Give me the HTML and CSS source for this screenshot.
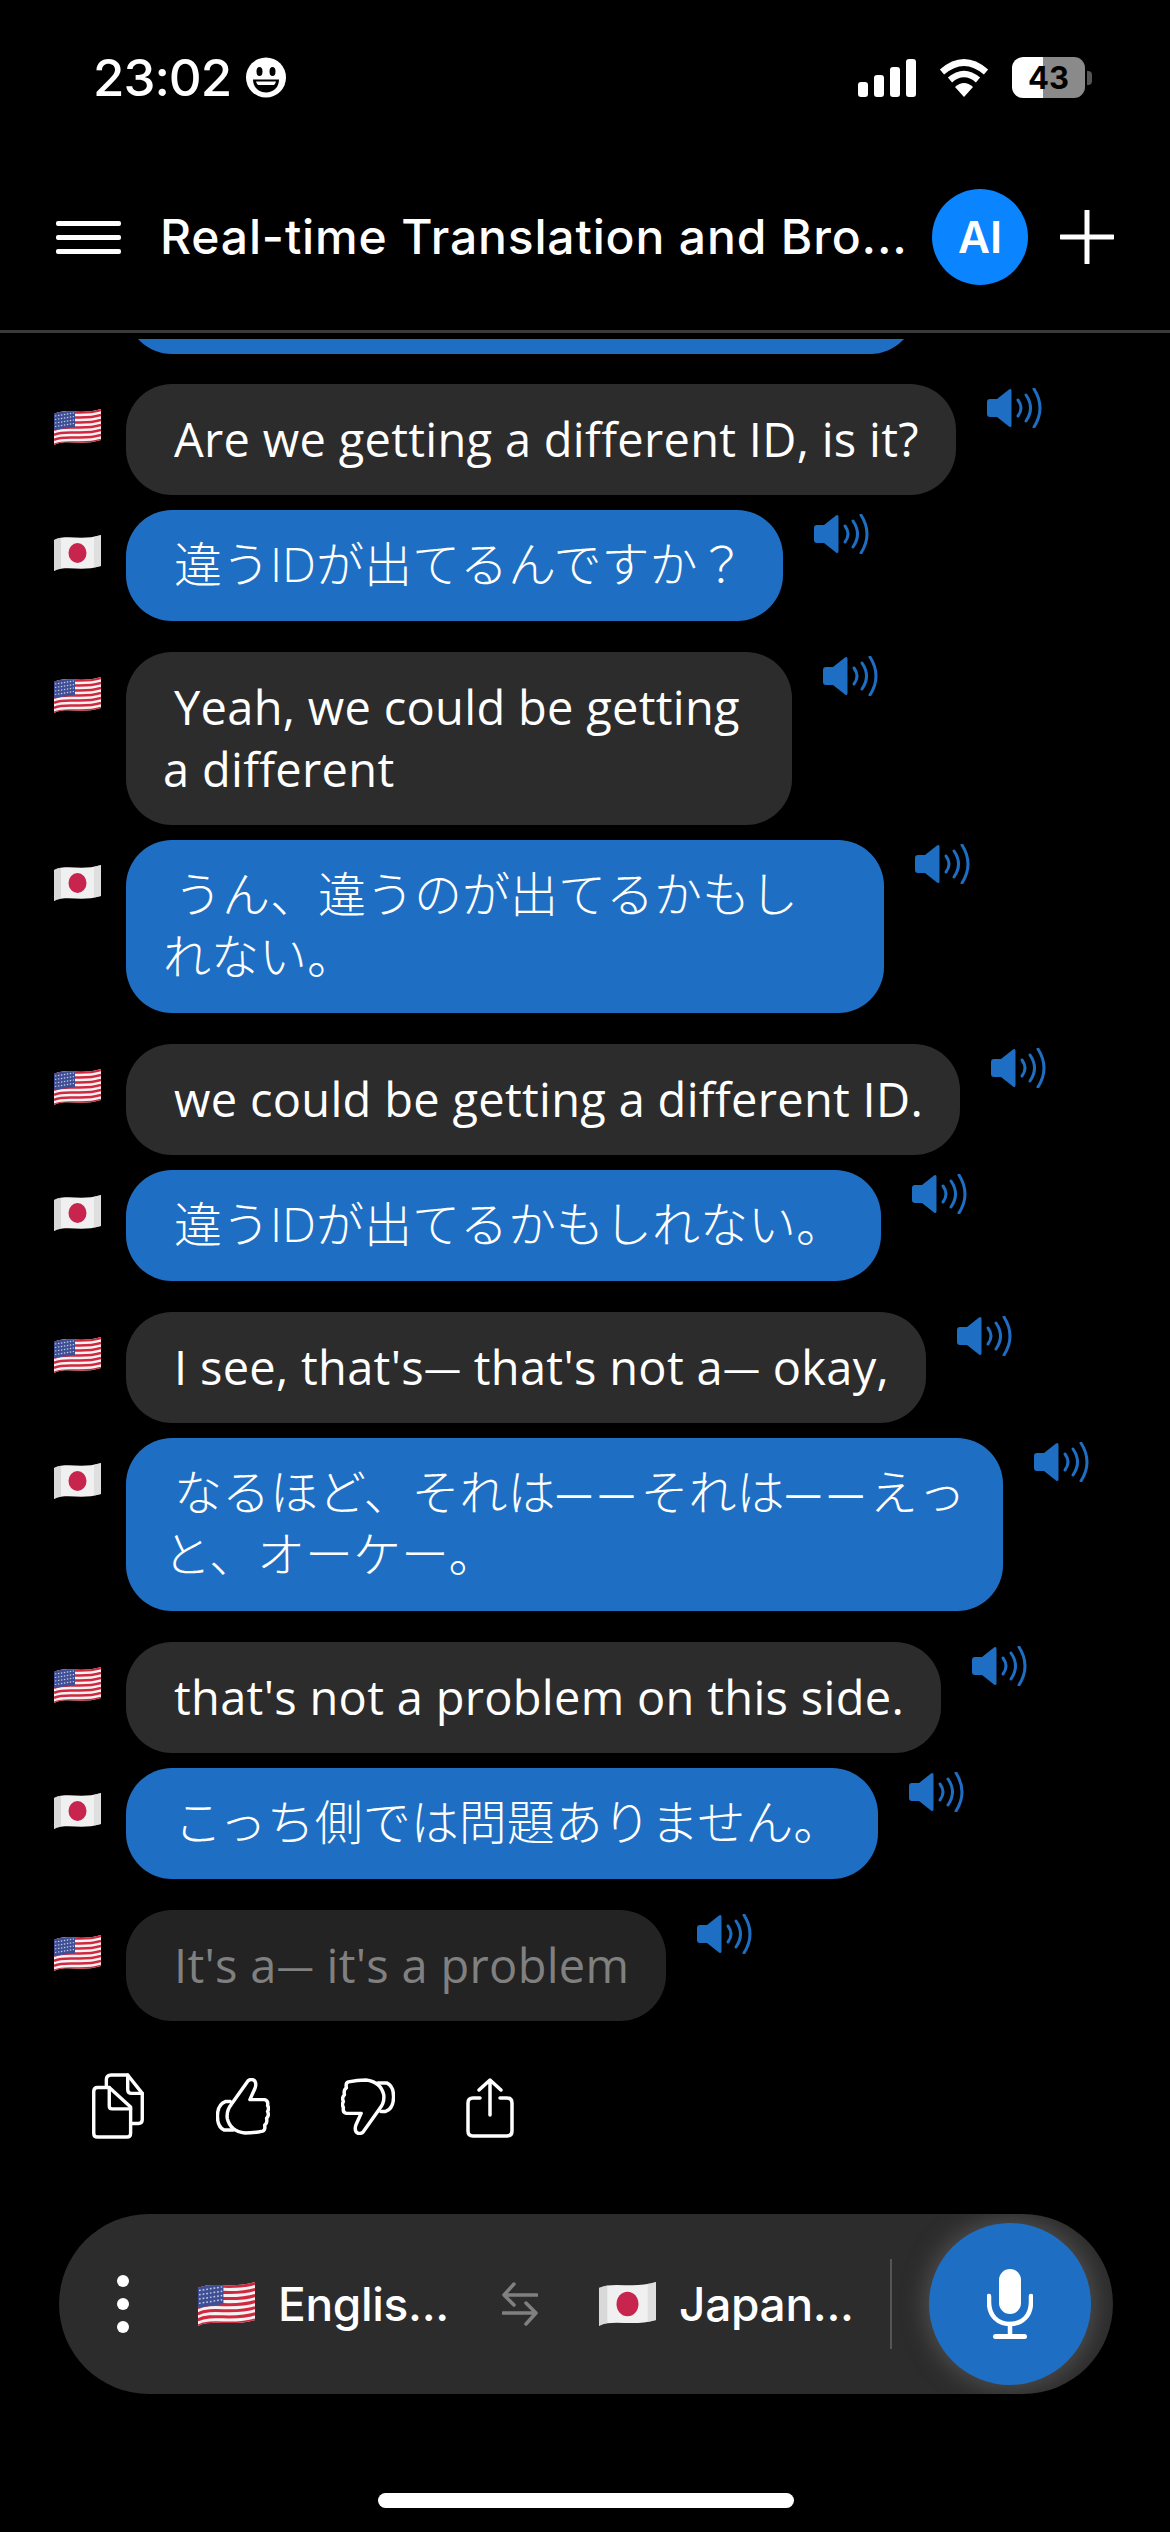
FILE: index.html
```html
<!DOCTYPE html>
<html lang="en">
<head>
    <meta charset="UTF-8">
    <meta name="viewport" content="width=device-width, initial-scale=1.0">
    <title>Real-time Translation and Broadcast</title>
    <link rel="stylesheet" href="styles.css">
</head>
<body>
    <!-- shared icons -->
    <svg class="defs" width="0" height="0">
        <defs>
            <clipPath id="wave"><path d="M0 5 C12 -1 28 6 47 0 V31 C28 37 12 30 0 36 Z"/></clipPath>
            <symbol id="flag-us" viewBox="0 0 47 36">
                <g clip-path="url(#wave)">
                    <rect width="47" height="36" fill="#f4f2f2"/>
                    <g fill="none" stroke="#d0283f" stroke-width="2.5">
                        <path d="M0 6 C12 0 28 7 47 1"/>
                        <path d="M0 11 C12 5 28 12 47 6"/>
                        <path d="M0 16 C12 10 28 17 47 11"/>
                        <path d="M0 21 C12 15 28 22 47 16"/>
                        <path d="M0 26 C12 20 28 27 47 21"/>
                        <path d="M0 31 C12 25 28 32 47 26"/>
                        <path d="M0 36 C12 30 28 37 47 31"/>
                    </g>
                    <path d="M0 4 L21 1 V18 L0 21 Z" fill="#3f4f96"/>
                    <g fill="none" stroke="#c6cbe4" stroke-width="1.2" stroke-dasharray="1.4 1.6">
                        <path d="M1 7 L20 4"/>
                        <path d="M1 10.500 L20 7.500"/>
                        <path d="M1 14 L20 11"/>
                        <path d="M1 17.500 L20 14.500"/>
                    </g>
                </g>
            </symbol>
            <symbol id="flag-jp" viewBox="0 0 47 36">
                <g clip-path="url(#wave)">
                    <rect width="47" height="36" fill="#f1f0f0"/>
                    <rect width="7" height="36" fill="#c9c9c9" opacity="0.6"/>
                    <rect x="40" width="7" height="36" fill="#d4d4d4" opacity="0.6"/>
                </g>
                <ellipse cx="23.500" cy="18" rx="9" ry="10" fill="#c7244e"/>
            </symbol>
            <symbol id="speaker" viewBox="0 0 55 40">
                <path d="M3 11 H10 L22 1.500 Q24.500 0 24.500 3 V37 Q24.500 40 22 38.500 L10 29 H3 Q0 29 0 26 V14 Q0 11 3 11 Z" fill="#1e6fc4"/>
                <g fill="none" stroke="#1e6fc4" stroke-width="3" stroke-linecap="round">
                    <path d="M31 12 Q37 20 31 28"/>
                    <path d="M39 7 Q48 20 39 33"/>
                    <path d="M47 1 Q59 20 47 39"/>
                </g>
            </symbol>
        </defs>
    </svg>

    <div class="phone">
        <div class="status-bar">
            <div class="status-left">
                <span class="clock">23:02</span>
                <svg class="smiley" viewBox="0 0 40 40">
                    <circle cx="20" cy="20" r="20" fill="#fff"/>
                    <ellipse cx="13.500" cy="14" rx="3" ry="4.500" fill="#000"/>
                    <ellipse cx="26.500" cy="14" rx="3" ry="4.500" fill="#000"/>
                    <path d="M7 22 H33 C33 30 27 35 20 35 C13 35 7 30 7 22 Z" fill="#000"/>
                    <path d="M10 24 H30 C29.500 25.500 29 26.500 28 27.500 H12 C11 26.500 10.500 25.500 10 24 Z" fill="#fff"/>
                </svg>
            </div>
            <div class="status-right">
                <svg class="signal" viewBox="0 0 58 38" fill="#fff">
                    <rect x="0" y="23" width="10" height="15" rx="3"/>
                    <rect x="16" y="16" width="10" height="22" rx="3"/>
                    <rect x="32" y="8" width="10" height="30" rx="3"/>
                    <rect x="48" y="0" width="10" height="38" rx="3"/>
                </svg>
                <svg class="wifi" viewBox="0 0 50 38">
                    <g fill="none" stroke="#fff" stroke-width="6.500">
                        <path d="M3 13 Q25 -6 47 13"/>
                        <path d="M11 21 Q25 9 39 21"/>
                    </g>
                    <path d="M25 38 L16 28 Q25 20 34 28 Z" fill="#fff"/>
                </svg>
                <div class="battery"><span>43</span></div>
                <div class="battery-nub"></div>
            </div>
        </div>

        <header class="top-bar">
            <div class="menu-btn"><i></i><i></i><i></i></div>
            <h1 class="chat-title">Real-time Translation and Bro...</h1>
            <div class="avatar">AI</div>
            <svg class="plus" viewBox="0 0 54 54">
                <path d="M27 1 V53 M1 27 H53" stroke="#fff" stroke-width="5" stroke-linecap="round"/>
            </svg>
        </header>

        <main class="chat">
            <div class="cut-bubble"><div></div></div>

            <div class="msg">
                <svg class="flag"><use href="#flag-us"/></svg>
                <div class="bubble en">Are we getting a different ID, is it?</div>
                <svg class="speak"><use href="#speaker"/></svg>
            </div>
            <div class="msg">
                <svg class="flag"><use href="#flag-jp"/></svg>
                <div class="bubble ja" lang="ja">違うIDが出てるんですか？</div>
                <svg class="speak"><use href="#speaker"/></svg>
            </div>

            <div class="msg new-group">
                <svg class="flag"><use href="#flag-us"/></svg>
                <div class="bubble en wrap-52">Yeah, we could be getting<br>a different</div>
                <svg class="speak"><use href="#speaker"/></svg>
            </div>
            <div class="msg">
                <svg class="flag"><use href="#flag-jp"/></svg>
                <div class="bubble ja wrap-86" lang="ja">うん、違うのが出てるかもし<br>れない。</div>
                <svg class="speak"><use href="#speaker"/></svg>
            </div>

            <div class="msg new-group">
                <svg class="flag"><use href="#flag-us"/></svg>
                <div class="bubble en">we could be getting a different ID.</div>
                <svg class="speak"><use href="#speaker"/></svg>
            </div>
            <div class="msg">
                <svg class="flag"><use href="#flag-jp"/></svg>
                <div class="bubble ja" lang="ja">違うIDが出てるかもしれない。</div>
                <svg class="speak"><use href="#speaker"/></svg>
            </div>

            <div class="msg new-group">
                <svg class="flag"><use href="#flag-us"/></svg>
                <div class="bubble en">I see, that's<span class="dash">—</span> that's not a<span class="dash">—</span> okay,</div>
                <svg class="speak"><use href="#speaker"/></svg>
            </div>
            <div class="msg">
                <svg class="flag"><use href="#flag-jp"/></svg>
                <div class="bubble ja" lang="ja">なるほど、それは<span class="dash">——</span>それは<span class="dash">——</span>えっ<br>と、オーケー。</div>
                <svg class="speak"><use href="#speaker"/></svg>
            </div>

            <div class="msg new-group">
                <svg class="flag"><use href="#flag-us"/></svg>
                <div class="bubble en">that's not a problem on this side.</div>
                <svg class="speak"><use href="#speaker"/></svg>
            </div>
            <div class="msg">
                <svg class="flag"><use href="#flag-jp"/></svg>
                <div class="bubble ja" lang="ja">こっち側では問題ありません。</div>
                <svg class="speak"><use href="#speaker"/></svg>
            </div>

            <div class="msg new-group">
                <svg class="flag"><use href="#flag-us"/></svg>
                <div class="bubble en pending">It's a<span class="dash">—</span> it's a problem</div>
                <svg class="speak"><use href="#speaker"/></svg>
            </div>
        </main>

        <div class="actions">
            <svg class="act-copy" viewBox="0 0 54 68" fill="none" stroke="#fff" stroke-width="3.500" stroke-linejoin="round" stroke-linecap="round">
                <path d="M18 15 H6 Q2 15 2 19 V62 Q2 66 6 66 H36 Q40 66 40 62 V35 Z"/>
                <path d="M18 15 V34 Q18 37 21 37 H40"/>
                <path d="M15 14 V7 Q15 2 20 2 H37 L52 21 V48 Q52 52 48 52 H41"/>
                <path d="M37 2 V17 Q37 21 41 21 H52"/>
            </svg>
            <svg class="act-thumb" viewBox="0 0 54 58" fill="none" stroke="#fff" stroke-width="3.500" stroke-linejoin="round" stroke-linecap="round">
                <path d="M15 27 L32 3 Q36 0 39 3 Q41 6 39 11 L34 22 H49 Q53 23 52 28 Q54 31 52 34 Q54 38 51 41 Q52 46 49 48 Q50 53 47 54 Q38 56 29 56 Q14 54 11 41 Q10 33 15 27 Z"/>
                <path d="M14 24 H9 Q1 27 1 39 Q1 50 8 53 H17"/>
            </svg>
            <svg class="act-thumb flip" viewBox="0 0 54 58" fill="none" stroke="#fff" stroke-width="3.500" stroke-linejoin="round" stroke-linecap="round">
                <path d="M15 27 L32 3 Q36 0 39 3 Q41 6 39 11 L34 22 H49 Q53 23 52 28 Q54 31 52 34 Q54 38 51 41 Q52 46 49 48 Q50 53 47 54 Q38 56 29 56 Q14 54 11 41 Q10 33 15 27 Z"/>
                <path d="M14 24 H9 Q1 27 1 39 Q1 50 8 53 H17"/>
            </svg>
            <svg class="act-share" viewBox="0 0 48 60" fill="none" stroke="#fff" stroke-width="3.500" stroke-linejoin="round" stroke-linecap="round">
                <path d="M14 20 H7 Q2 20 2 25 V53 Q2 58 7 58 H41 Q46 58 46 53 V25 Q46 20 41 20 H34"/>
                <path d="M24 37 V2 M13 12 L24 2 L35 12"/>
            </svg>
        </div>

        <div class="input-bar">
            <div class="more-btn"><i></i><i></i><i></i></div>
            <div class="lang lang-from">
                <svg class="lang-flag"><use href="#flag-us"/></svg>
                <span>Englis...</span>
            </div>
            <svg class="swap" viewBox="0 0 36 44" fill="none" stroke="#808080" stroke-width="3.500" stroke-linecap="round" stroke-linejoin="round">
                <path d="M35 13 H2 M12 2 L2 13 L12 23"/>
                <path d="M1 31 H34 M24 21 L34 31 L24 42"/>
            </svg>
            <div class="lang lang-to">
                <svg class="lang-flag"><use href="#flag-jp"/></svg>
                <span>Japan...</span>
            </div>
            <div class="bar-sep"></div>
            <div class="mic-btn">
                <svg class="mic" viewBox="0 0 46 70" fill="none" stroke="#fff" stroke-linecap="round">
                    <rect x="12" y="0" width="22" height="45" rx="11" fill="#fff" stroke="none"/>
                    <path d="M2 27 V33 C2 47 11 55 23 55 C35 55 44 47 44 33 V27" stroke-width="4.500"/>
                    <path d="M23 55 V66" stroke-width="4.500"/>
                    <rect x="6" y="65" width="34" height="5" rx="2.500" fill="#fff" stroke="none"/>
                </svg>
            </div>
        </div>

        <div class="home-indicator"></div>
    </div>
</body>
</html>
```

FILE: styles.css
```css
* { box-sizing: border-box; }
body { margin: 0; background-color: #000; color: #fff; font-family: "Inter", "Noto Sans CJK JP", sans-serif; }
.defs { position: absolute; }
.phone { width: 1170px; height: 2532px; overflow: hidden; }

/* status bar */
.status-bar { height: 160px; padding: 57px 78px 0 93px; display: flex; justify-content: space-between; align-items: flex-start; }
.status-left { display: flex; align-items: center; gap: 15px; }
.clock { font-size: 51px; line-height: 41px; font-weight: 500; letter-spacing: -1px; }
.smiley { width: 40px; height: 41px; }
.status-right { display: flex; align-items: center; }
.signal { width: 58px; height: 38px; margin-right: 23px; }
.wifi { width: 50px; height: 38px; margin-right: 23px; }
.battery { width: 73px; height: 41px; border-radius: 11px; background: linear-gradient(90deg, #fff 42%, #8a8a8a 42%); color: #000; font-size: 31px; font-weight: 700; text-align: center; line-height: 41px; }
.battery-nub { width: 5px; height: 14px; margin-left: 2px; background-color: #555; border-radius: 0 4px 4px 0; }

/* header */
.top-bar { height: 173px; padding: 29px 0 0 56px; display: flex; align-items: flex-start; border-bottom: 3px solid #3a3a3a; }
.menu-btn { width: 65px; height: 96px; display: flex; flex-direction: column; justify-content: center; gap: 9px; flex: none; }
.menu-btn i { display: block; height: 5px; background-color: #fff; border-radius: 2px; }
.chat-title { margin: 0 0 0 39px; width: 772px; flex: none; font-size: 48px; line-height: 96px; font-weight: 500; letter-spacing: 0.85px; white-space: nowrap; font-family: "Inter", sans-serif; }
.avatar { width: 96px; height: 96px; border-radius: 50%; background-color: #0a84ff; font-size: 44px; font-weight: 600; line-height: 96px; text-align: center; flex: none; }
.plus { width: 54px; height: 54px; margin: 21px 0 0 32px; flex: none; }

/* chat list */
.chat { height: 1700px; padding-top: 6px; overflow: hidden; }
.cut-bubble { height: 15px; margin: 0 254px 30px 126px; overflow: hidden; }
.cut-bubble div { height: 100px; margin-top: -85px; background-color: #1e6fc4; border-radius: 46px; }
.msg { display: flex; align-items: flex-start; padding-left: 54px; margin-bottom: 15px; }
.msg.new-group { margin-top: 31px; }
.flag { width: 47px; height: 36px; margin: 25px 25px 0 0; flex: none; }
.bubble { font-size: 47px; line-height: 62px; text-indent: 11px; border-radius: 46px; white-space: nowrap; }
.bubble.en { padding: 24px 37px 25px; background-color: #2c2c2c; font-family: "Open Sans", sans-serif; letter-spacing: 0.3px; }
.bubble.ja { padding: 23px 37px 26px; background-color: #1e6fc4; font-family: "Open Sans", "Noto Sans CJK JP", sans-serif; font-size: 48px; font-weight: 300; }
.bubble.wrap-52 { padding-right: 52px; }
.bubble.wrap-86 { padding-right: 86px; }
.bubble.pending { background-color: #232323; color: #808080; }
.dash { font-size: 37px; line-height: 0; vertical-align: 3px; }
.bubble.ja .dash { letter-spacing: 5.5px; font-weight: 400; }
.speak { width: 55px; height: 40px; margin: 4px 0 0 31px; flex: none; }

/* icons under the last message */
.actions { display: flex; align-items: flex-end; gap: 71px; padding: 39px 0 0 91px; height: 106px; }
.actions svg { display: block; }
.act-copy { width: 54px; height: 66px; }
.act-thumb { width: 54px; height: 57px; margin-bottom: 4px; }
.act-thumb.flip { transform: rotate(180deg); }
.act-share { width: 48px; height: 60px; margin-bottom: 1px; }

/* bottom bar */
.input-bar { width: 1054px; height: 180px; margin: 75px 0 0 59px; padding-left: 58px; display: flex; align-items: center; background-color: #2c2c2c; border-radius: 90px; overflow: hidden; }
.more-btn { width: 12px; display: flex; flex-direction: column; gap: 11px; }
.more-btn i { display: block; width: 12px; height: 12px; border-radius: 50%; background-color: #fff; }
.lang { display: flex; align-items: center; gap: 22px; font-size: 46px; font-weight: 500; letter-spacing: -0.3px; font-family: "Inter", sans-serif; white-space: nowrap; }
.lang-from { width: 305px; margin-left: 68px; }
.lang-to { width: 292px; margin-left: 60px; }
.lang-flag { width: 59px; height: 44px; flex: none; }
.swap { width: 36px; height: 44px; flex: none; }
.bar-sep { width: 2px; height: 90px; background-color: #555; flex: none; }
.mic-btn { width: 162px; height: 162px; margin-left: 37px; border-radius: 50%; background-color: #1e6fc4; box-shadow: 0 0 22px 5px rgba(110, 110, 110, 0.5); display: flex; align-items: center; justify-content: center; flex: none; }
.mic { width: 46px; height: 70px; }

.home-indicator { width: 416px; height: 15px; margin: 99px 0 0 378px; background-color: #fff; border-radius: 8px; }
```
